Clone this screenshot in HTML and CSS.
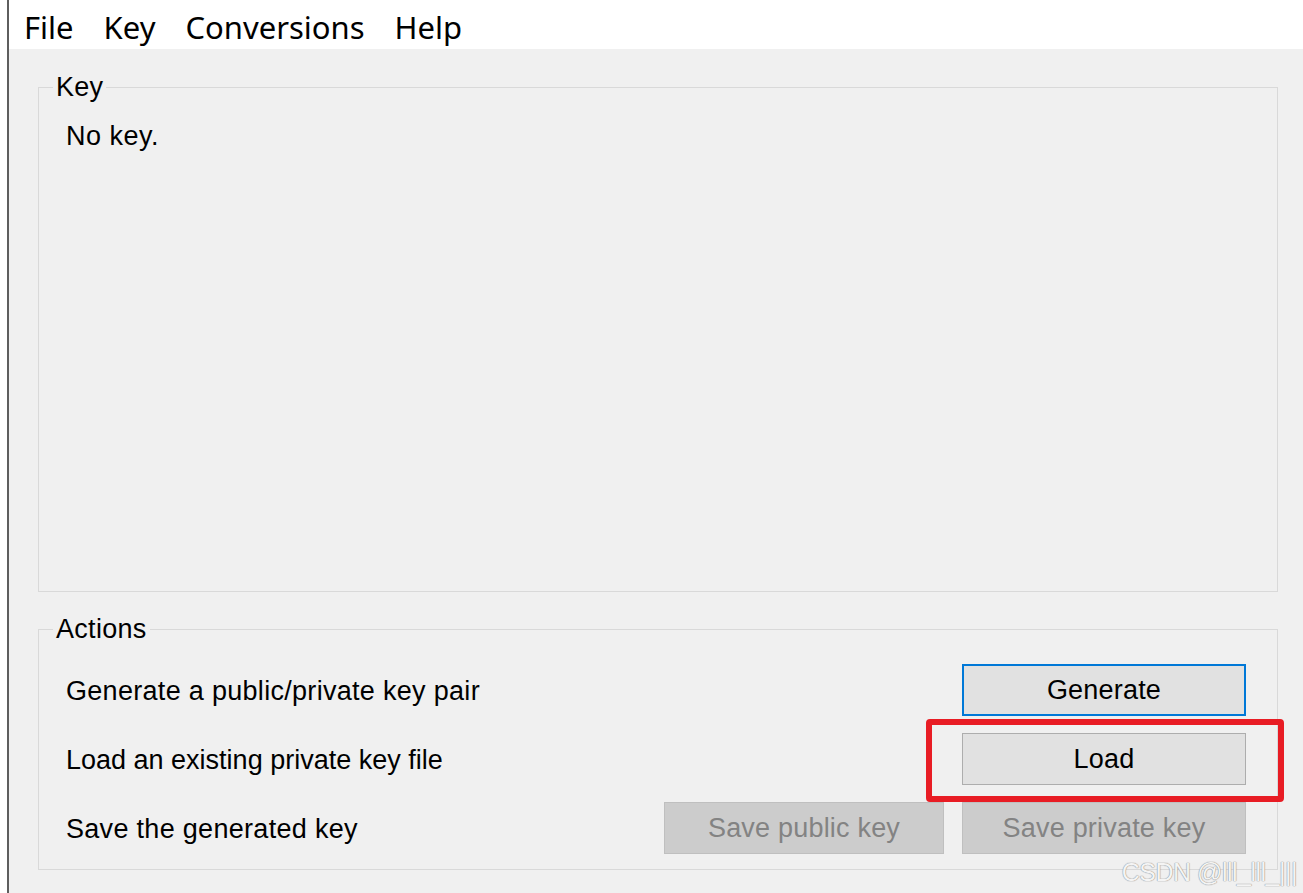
FILE: index.html
```html
<!DOCTYPE html>
<html lang="en">
<head>
<meta charset="utf-8">
<title>PuTTY Key Generator</title>
<link rel="stylesheet" href="styles.css">
</head>
<body>
<div class="window">
  <nav class="menubar">
    <span class="menu-item">File</span>
    <span class="menu-item">Key</span>
    <span class="menu-item">Conversions</span>
    <span class="menu-item">Help</span>
  </nav>
  <main class="client">
    <fieldset class="group group-key">
      <legend>Key</legend>
      <div class="nokey">No key.</div>
    </fieldset>
    <fieldset class="group group-actions">
      <legend>Actions</legend>
      <div class="actions">
        <div class="label r1">Generate a public/private key pair</div>
        <button class="btn btn-default c3 r1">Generate</button>
        <div class="label label-tight r2">Load an existing private key file</div>
        <div class="highlight c3 r2">
          <button class="btn">Load</button>
        </div>
        <div class="label r3">Save the generated key</div>
        <button class="btn btn-disabled c2 r3" disabled>Save public key</button>
        <button class="btn btn-disabled c3 r3" disabled>Save private key</button>
      </div>
    </fieldset>
  </main>
  <div class="watermark">CSDN @lll_lll_|||</div>
</div>
</body>
</html>
```
FILE: styles.css
```css
* { box-sizing: border-box; }
html, body {
  margin: 0;
  padding: 0;
  background: #ffffff;
  width: 1303px;
  height: 893px;
  overflow: hidden;
}
.window {
  position: relative;
  margin-left: 7px;
  height: 893px;
  border-left: 2px solid #5e5e5e;
  background: #f0f0f0;
  font-family: "Liberation Sans", Arial, sans-serif;
  color: #000;
}
.menubar {
  height: 49px;
  background: #ffffff;
  display: flex;
  align-items: center;
  padding-left: 15px;
  padding-top: 5px;
  gap: 30px;
  font-family: "Noto Sans", "Open Sans", sans-serif;
  font-size: 31px;
  color: #000;
}
.menu-item { line-height: 40px; }
.client {
  padding: 23px 25px 0 29px;
}
.group {
  margin: 0;
  border: 1px solid #d9d9d9;
  padding: 0 31px 0 27px;
  min-width: 0;
}
.group legend {
  font-size: 27px;
  letter-spacing: 0.3px;
  line-height: 30px;
  padding: 0 3px;
  margin-left: -13px;
}
.group-key {
  height: 520px;
}
.nokey {
  font-size: 27px;
  letter-spacing: 0.5px;
  line-height: 30px;
  margin-top: 19px;
}
.group-actions {
  margin-top: 22px;
  padding-bottom: 15px;
}
.actions {
  margin-top: 20px;
  display: grid;
  grid-template-columns: 1fr 280px 284px;
  grid-template-rows: 52px 52px 52px;
  column-gap: 18px;
  row-gap: 17px;
}
.label {
  grid-column: 1;
  font-size: 27px;
  letter-spacing: 0.3px;
  line-height: 30px;
  align-self: center;
  padding-top: 1px;
}
.label-tight { letter-spacing: 0; }
.r1 { grid-row: 1; }
.r2 { grid-row: 2; }
.r3 { grid-row: 3; }
.c2 { grid-column: 2; }
.c3 { grid-column: 3; }
.btn {
  width: 100%;
  height: 100%;
  margin: 0;
  font-family: "Liberation Sans", Arial, sans-serif;
  font-size: 27px;
  letter-spacing: 0.2px;
  color: #000;
  background: #e1e1e1;
  border: 1px solid #adadad;
  border-radius: 0;
  padding: 0;
}
.btn-default {
  border: 2px solid #0078d7;
}
.btn-disabled {
  background: #cccccc;
  border-color: #bfbfbf;
  color: #838383;
}
.highlight {
  position: relative;
}
.highlight::after {
  content: "";
  position: absolute;
  left: -36px;
  top: -14px;
  right: -38px;
  bottom: -17px;
  border: 6px solid #e81c24;
  border-radius: 4px;
  pointer-events: none;
}
.watermark {
  position: absolute;
  right: 6px;
  bottom: 7px;
  font-family: "Liberation Sans", Arial, sans-serif;
  font-size: 25px;
  line-height: 28px;
  color: #f4f4f4;
  text-shadow: 0 0 1px #8a8a8a, 0 0 1px #8a8a8a;
  letter-spacing: -0.5px;
}
```
